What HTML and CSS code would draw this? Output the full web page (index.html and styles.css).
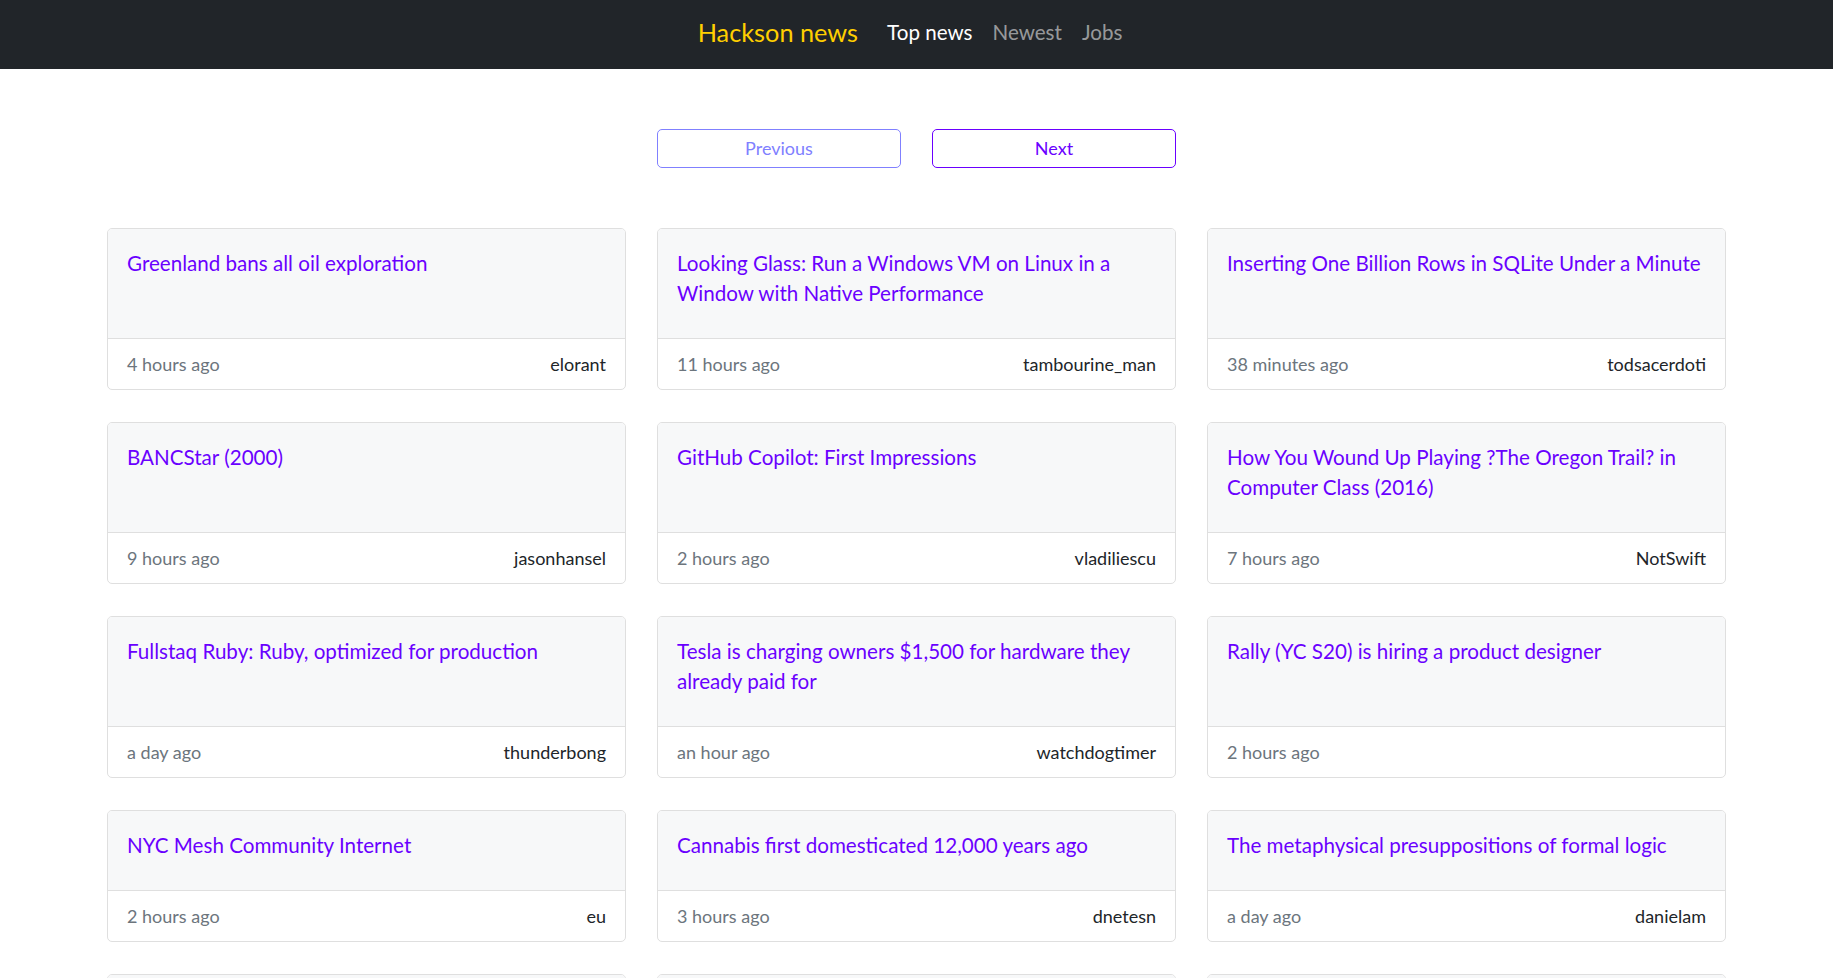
FILE: index.html
```html
<!DOCTYPE html>
<html lang="en">
<head>
<meta charset="utf-8">
<title>Hackson news</title>
<link rel="stylesheet" href="styles.css">
</head>
<body>
<nav class="navbar">
  <div class="nav-inner">
    <a class="brand" href="#">Hackson news</a>
    <div class="nav-links">
      <a class="nav-link active" href="#">Top news</a>
      <a class="nav-link" href="#">Newest</a>
      <a class="nav-link" href="#">Jobs</a>
    </div>
  </div>
</nav>
<main class="main">
  <div class="pager-row">
    <div class="pager">
      <button class="btn btn-disabled" disabled>Previous</button>
      <button class="btn">Next</button>
    </div>
  </div>
  <div class="cards">
    <div class="card"><div class="card-header"><a class="card-title" href="#">Greenland bans all oil exploration</a></div><div class="card-footer"><span class="time">4 hours ago</span><span class="author">elorant</span></div></div>
    <div class="card"><div class="card-header"><a class="card-title" href="#">Looking Glass: Run a Windows VM on Linux in a Window with Native Performance</a></div><div class="card-footer"><span class="time">11 hours ago</span><span class="author">tambourine_man</span></div></div>
    <div class="card"><div class="card-header"><a class="card-title" href="#">Inserting One Billion Rows in SQLite Under a Minute</a></div><div class="card-footer"><span class="time">38 minutes ago</span><span class="author">todsacerdoti</span></div></div>

    <div class="card"><div class="card-header"><a class="card-title" href="#">BANCStar (2000)</a></div><div class="card-footer"><span class="time">9 hours ago</span><span class="author">jasonhansel</span></div></div>
    <div class="card"><div class="card-header"><a class="card-title" href="#">GitHub Copilot: First Impressions</a></div><div class="card-footer"><span class="time">2 hours ago</span><span class="author">vladiliescu</span></div></div>
    <div class="card"><div class="card-header"><a class="card-title" href="#">How You Wound Up Playing ?The Oregon Trail? in Computer Class (2016)</a></div><div class="card-footer"><span class="time">7 hours ago</span><span class="author">NotSwift</span></div></div>

    <div class="card"><div class="card-header"><a class="card-title" href="#">Fullstaq Ruby: Ruby, optimized for production</a></div><div class="card-footer"><span class="time">a day ago</span><span class="author">thunderbong</span></div></div>
    <div class="card"><div class="card-header"><a class="card-title" href="#">Tesla is charging owners $1,500 for hardware they already paid for</a></div><div class="card-footer"><span class="time">an hour ago</span><span class="author">watchdogtimer</span></div></div>
    <div class="card"><div class="card-header"><a class="card-title" href="#">Rally (YC S20) is hiring a product designer</a></div><div class="card-footer"><span class="time">2 hours ago</span><span class="author"></span></div></div>

    <div class="card"><div class="card-header"><a class="card-title" href="#">NYC Mesh Community Internet</a></div><div class="card-footer"><span class="time">2 hours ago</span><span class="author">eu</span></div></div>
    <div class="card"><div class="card-header"><a class="card-title" href="#">Cannabis first domesticated 12,000 years ago</a></div><div class="card-footer"><span class="time">3 hours ago</span><span class="author">dnetesn</span></div></div>
    <div class="card"><div class="card-header"><a class="card-title" href="#">The metaphysical presuppositions of formal logic</a></div><div class="card-footer"><span class="time">a day ago</span><span class="author">danielam</span></div></div>

    <div class="card"><div class="card-header"><a class="card-title" href="#">Show HN: A static site generator in one file</a></div><div class="card-footer"><span class="time">5 hours ago</span><span class="author">user</span></div></div>
    <div class="card"><div class="card-header"><a class="card-title" href="#">The history of the terminal</a></div><div class="card-footer"><span class="time">6 hours ago</span><span class="author">user</span></div></div>
    <div class="card"><div class="card-header"><a class="card-title" href="#">Why we moved to Postgres</a></div><div class="card-footer"><span class="time">8 hours ago</span><span class="author">user</span></div></div>
  </div>
</main>
</body>
</html>
```

FILE: styles.css
```css
* { box-sizing: border-box; }
html, body { margin: 0; padding: 0; }
body {
  font-family: Lato, "Open Sans", "Liberation Sans", sans-serif;
  font-size: 16px;
  line-height: 1.5;
  color: #212529;
  background: #fff;
}
a { text-decoration: none; }

.navbar {
  background: #212529;
  height: 69px;
  padding-bottom: 4px;
  display: flex;
  align-items: center;
  justify-content: center;
}
.nav-inner {
  display: flex;
  align-items: center;
  gap: 29px;
  padding-right: 13px;
}
.brand {
  color: #ffcf00;
  font-size: 25.3px;
  line-height: 1.2;
}
.nav-links {
  display: flex;
  align-items: center;
  gap: 20px;
}
.nav-link {
  color: rgba(255, 255, 255, 0.55);
  font-size: 20.6px;
  line-height: 1.2;
}
.nav-link.active { color: #fff; }

.main {
  padding: 60px 107px 0;
}
.pager-row {
  display: grid;
  grid-template-columns: repeat(3, 1fr);
  column-gap: 31px;
  margin-bottom: 60px;
}
.pager {
  grid-column: 2;
  display: grid;
  grid-template-columns: 1fr 1fr;
  gap: 31px;
}
.btn {
  font-family: inherit;
  font-size: 18px;
  line-height: 24px;
  height: 39px;
  padding: 5px 12px 6px;
  background: #fff;
  border: 1px solid #6a00ff;
  color: #6a00ff;
  border-radius: 5px;
  cursor: pointer;
}
.btn-disabled {
  border-color: #8080ff;
  color: #8080ff;
  cursor: default;
}

.cards {
  display: grid;
  grid-template-columns: repeat(3, 1fr);
  column-gap: 31px;
  row-gap: 32px;
}
.card {
  border: 1px solid #dfdfdf;
  border-radius: 5px;
  overflow: hidden;
  display: flex;
  flex-direction: column;
  background: #fff;
}
.card-header {
  flex: 1;
  background: #f7f8f9;
  border-bottom: 1px solid #dfdfdf;
  padding: 19px 19px 30px;
}
.card-title {
  display: block;
  color: #6a00ff;
  font-size: 20.6px;
  line-height: 30px;
}
.card-footer {
  display: flex;
  justify-content: space-between;
  align-items: center;
  padding: 13px 19px;
  font-size: 18px;
  line-height: 24px;
}
.time { color: #6c757d; }
.author { color: #212529; }
```
